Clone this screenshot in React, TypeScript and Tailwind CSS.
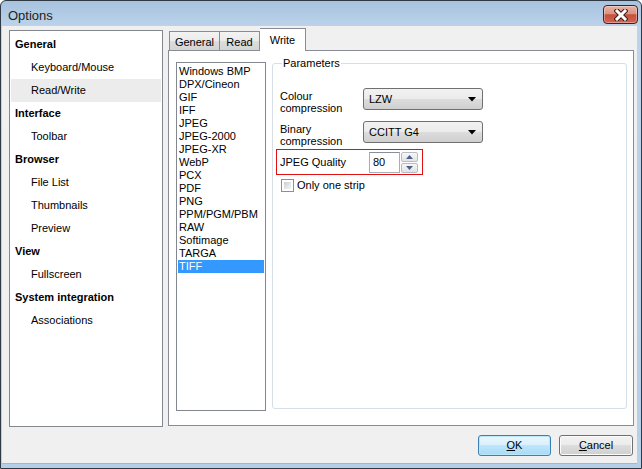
import React from "react";

const font = { fontFamily: '"Liberation Sans", Arial, sans-serif' };

const tree: { label: string; heading?: boolean; selected?: boolean }[] = [
  { label: "General", heading: true },
  { label: "Keyboard/Mouse" },
  { label: "Read/Write", selected: true },
  { label: "Interface", heading: true },
  { label: "Toolbar" },
  { label: "Browser", heading: true },
  { label: "File List" },
  { label: "Thumbnails" },
  { label: "Preview" },
  { label: "View", heading: true },
  { label: "Fullscreen" },
  { label: "System integration", heading: true },
  { label: "Associations" },
];

const formats = [
  "Windows BMP",
  "DPX/Cineon",
  "GIF",
  "IFF",
  "JPEG",
  "JPEG-2000",
  "JPEG-XR",
  "WebP",
  "PCX",
  "PDF",
  "PNG",
  "PPM/PGM/PBM",
  "RAW",
  "Softimage",
  "TARGA",
  "TIFF",
];

function CloseButton() {
  return (
    <div className="flex h-[19px] w-[35px] items-center justify-center rounded-[4px] border border-[#4a1e18] bg-[linear-gradient(to_bottom,#eab2a6_0%,#dc9282_45%,#c6513d_52%,#d2644f_100%)] shadow-[inset_0_0_0_1px_rgba(255,255,255,0.35)]">
      <svg width="14" height="12" viewBox="0 0 14 12">
        <path d="M3 2 L11 10 M11 2 L3 10" stroke="#3b1a14" strokeWidth="5" strokeLinecap="square" />
        <path d="M3 2 L11 10 M11 2 L3 10" stroke="#ffffff" strokeWidth="3" strokeLinecap="square" />
      </svg>
    </div>
  );
}

function Combo({ value }: { value: string }) {
  return (
    <div className="flex h-[22px] w-[120px] items-center justify-between rounded-[3px] border border-[#707070] bg-[linear-gradient(to_bottom,#f2f2f2_0%,#ebebeb_50%,#dddddd_50%,#cfcfcf_100%)] pl-[5px] pr-[6px]">
      <span>{value}</span>
      <svg width="8" height="5" viewBox="0 0 8 5">
        <path d="M0 0 H8 L4 4.5 Z" fill="#000" />
      </svg>
    </div>
  );
}

function SpinArrow({ up }: { up?: boolean }) {
  return (
    <div className="flex h-[10px] w-[17px] items-center justify-center rounded-[2px] border border-[#b6bcc6] bg-[linear-gradient(to_bottom,#f7f7f7,#e3e3e3)]">
      <svg width="7" height="4" viewBox="0 0 7 4">
        <path d={up ? "M0 4 H7 L3.5 0 Z" : "M0 0 H7 L3.5 4 Z"} fill="#4d6185" />
      </svg>
    </div>
  );
}

export default function App() {
  return (
    <div style={font} className="h-[469px] w-[642px] text-[11px] text-black">
      <div className="flex h-full w-full flex-col rounded-t-[6px] border border-[#2f3a46] bg-[linear-gradient(to_bottom,#a8c3df_0px,#bcd3ea_26px,#b6cfe8_100%)]">
        {/* Title bar */}
        <div className="flex h-[25px] items-start justify-between">
          <span className="pl-[7px] pt-[7px] text-[13px] leading-[15px] text-[#1e1e1e]">Options</span>
          <div className="mr-[3px] mt-[4px]">
            <CloseButton />
          </div>
        </div>

        {/* Client */}
        <div className="mb-[4px] ml-[1px] mr-[4px] flex flex-1 flex-col border-b border-[#7fc6e6] bg-[#f0f0f0] pt-[2px]">
          <div className="flex items-start">
            {/* Category tree */}
            <div className="ml-[7px] mt-[2px] h-[397px] w-[154px] border border-[#828790] bg-white pt-[2px]">
              {tree.map((t) => (
                <div
                  key={t.label}
                  className={`mx-[1px] flex h-[23px] items-center ${t.heading ? "pl-[4px] font-bold" : "pl-[20px]"} ${
                    t.selected ? "bg-[#ececec]" : ""
                  }`}
                >
                  {t.label}
                </div>
              ))}
            </div>

            {/* Tab control */}
            <div className="ml-[5px] flex h-[398px] w-[466px] flex-col">
              <div className="flex h-[22px] items-end pl-[1px]">
                <div className="flex h-[19px] w-[51px] items-center justify-center border border-b-0 border-[#898c95] bg-[linear-gradient(to_bottom,#f3f3f3_0%,#ebebeb_50%,#dddddd_50%,#d4d4d4_100%)] pt-[2px]">
                  General
                </div>
                <div className="flex h-[19px] w-[40px] items-center justify-center border border-b-0 border-l-0 border-[#898c95] bg-[linear-gradient(to_bottom,#f3f3f3_0%,#ebebeb_50%,#dddddd_50%,#d4d4d4_100%)] pt-[2px]">
                  Read
                </div>
                <div className="relative z-10 -mb-[1px] flex h-[23px] w-[46px] items-start justify-center border border-b-0 border-l-0 border-[#898c95] bg-white pt-[3px]">
                  Write
                </div>
              </div>
              <div className="flex flex-1 gap-[6px] border border-[#898c95] bg-white pl-[7px] pt-[11px]">
                {/* Format list */}
                <div className="h-[349px] w-[90px] border border-[#828790] px-[1px] pt-[2px]">
                  {formats.map((f) => (
                    <div
                      key={f}
                      className={`h-[13px] pl-[1px] leading-[13px] ${f === "TIFF" ? "bg-[#3399ff] text-white" : ""}`}
                    >
                      {f}
                    </div>
                  ))}
                </div>

                {/* Parameters group */}
                <div className="relative mt-[1px] h-[346px] w-[355px] rounded-[3px] border border-[#d5dfe5] pl-[3px] pt-[24px]">
                  <span className="absolute -top-[7px] left-[9px] bg-white px-[1px] leading-[13px]">Parameters</span>

                  <div className="flex h-[22px] pl-[4px]">
                    <div className="w-[83px] pt-[2px] leading-[12px]">
                      Colour
                      <br />
                      compression
                    </div>
                    <Combo value="LZW" />
                  </div>

                  <div className="mt-[11px] flex h-[22px] pl-[4px]">
                    <div className="w-[83px] pt-[2px] leading-[12px]">
                      Binary
                      <br />
                      compression
                    </div>
                    <Combo value="CCITT G4" />
                  </div>

                  <div className="mt-[6px] flex h-[26px] w-[147px] items-center border border-[#e01010] pl-[3px]">
                    <span className="w-[89px]">JPEG Quality</span>
                    <div className="flex h-[21px] w-[31px] items-center border border-[#abadb3] border-t-[#8a8e96] pl-[3px]">
                      80
                    </div>
                    <div className="ml-[1px] flex flex-col gap-[1px]">
                      <SpinArrow up />
                      <SpinArrow />
                    </div>
                  </div>

                  <div className="mt-[2px] flex items-center gap-[3px] pl-[5px]">
                    <div className="h-[13px] w-[13px] border border-[#8e8f8f] bg-white p-[2px]">
                      <div className="h-full w-full bg-[linear-gradient(135deg,#cbcfd5,#f6f6f6)]" />
                    </div>
                    <span>Only one strip</span>
                  </div>
                </div>
              </div>
            </div>
          </div>

          {/* Buttons */}
          <div className="mt-[8px] flex justify-end gap-[8px] pr-[4px]">
            <button className="flex h-[21px] w-[73px] items-center justify-center rounded-[3px] border border-[#3c7fb1] bg-[linear-gradient(to_bottom,#eaf6fd_0%,#d9f0fc_50%,#bee6fd_50%,#a7d9f5_100%)] shadow-[inset_0_0_0_1px_#b8e6fb]">
              <span>
                <span className="underline">O</span>K
              </span>
            </button>
            <button className="flex h-[21px] w-[74px] items-center justify-center rounded-[3px] border border-[#707070] bg-[linear-gradient(to_bottom,#f2f2f2_0%,#ebebeb_50%,#dddddd_50%,#cfcfcf_100%)] shadow-[inset_0_0_0_1px_#fcfcfc]">
              <span>
                <span className="underline">C</span>ancel
              </span>
            </button>
          </div>
        </div>
      </div>
    </div>
  );
}
